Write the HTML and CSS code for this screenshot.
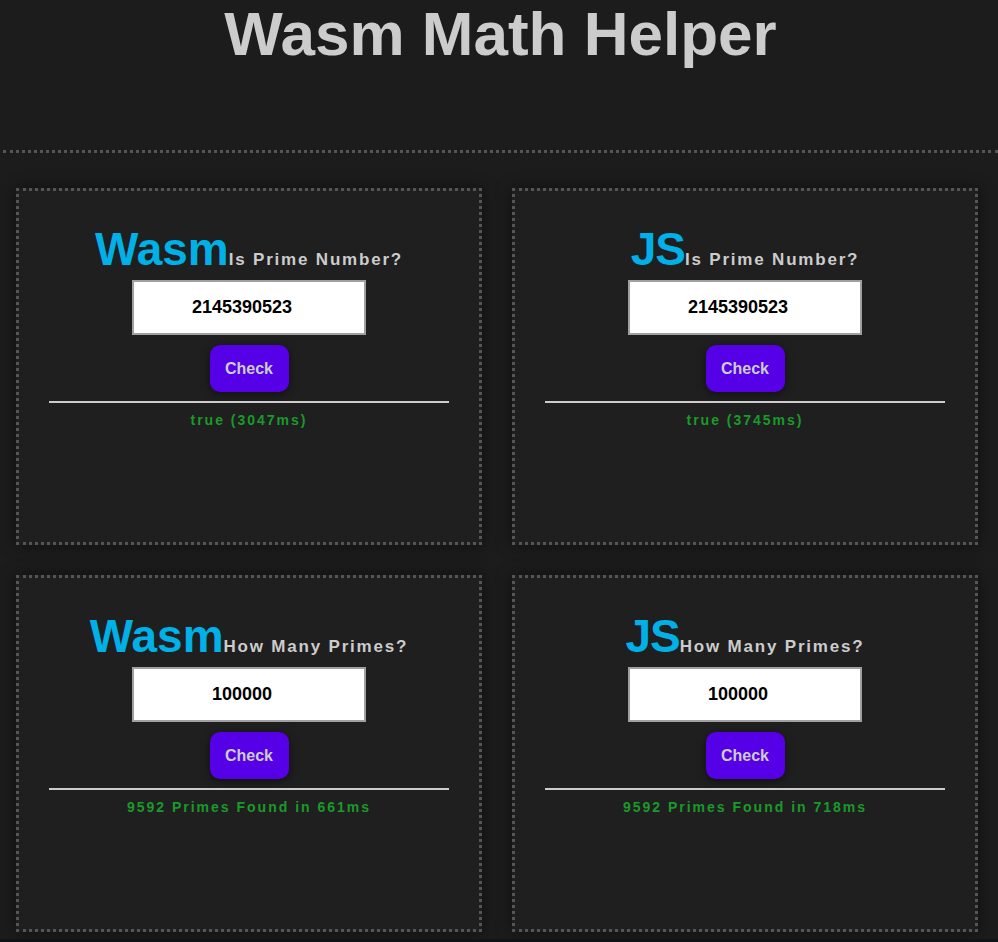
FILE: index.html
```html
<!DOCTYPE html>
<html lang="en">
<head>
<meta charset="utf-8">
<title>Wasm Math Helper</title>
<link rel="stylesheet" href="styles.css">
</head>
<body>
<header class="header">
  <h1 class="title">Wasm Math Helper</h1>
</header>
<main class="grid">
  <section class="card">
    <h2 class="card-title"><span class="lang">Wasm</span><span class="task">Is Prime Number?</span></h2>
    <input class="num" type="text" value="2145390523">
    <button class="btn">Check</button>
    <hr class="rule">
    <p class="result">true (3047ms)</p>
  </section>
  <section class="card">
    <h2 class="card-title"><span class="lang lang-js">JS</span><span class="task">Is Prime Number?</span></h2>
    <input class="num" type="text" value="2145390523">
    <button class="btn">Check</button>
    <hr class="rule">
    <p class="result">true (3745ms)</p>
  </section>
  <section class="card">
    <h2 class="card-title"><span class="lang">Wasm</span><span class="task">How Many Primes?</span></h2>
    <input class="num" type="text" value="100000">
    <button class="btn">Check</button>
    <hr class="rule">
    <p class="result">9592 Primes Found in 661ms</p>
  </section>
  <section class="card">
    <h2 class="card-title"><span class="lang lang-js">JS</span><span class="task">How Many Primes?</span></h2>
    <input class="num" type="text" value="100000">
    <button class="btn">Check</button>
    <hr class="rule">
    <p class="result">9592 Primes Found in 718ms</p>
  </section>
</main>
</body>
</html>
```
FILE: styles.css
```css
html {
  background: #0f1419;
}
body {
  margin: 0;
  background: #1c1c1c;
  font-family: "Liberation Sans", Arial, sans-serif;
  font-weight: 700;
  color: #cccccc;
  padding-bottom: 7px;
}
.header {
  height: 150px;
  border-bottom: 3px dotted #555555;
  margin-left: 3px;
}
.title {
  margin: 0;
  text-align: center;
  font-size: 62px;
  font-weight: 700;
  line-height: 68px;
  color: #cccccc;
}
.grid {
  display: grid;
  grid-template-columns: 466px 466px;
  column-gap: 30px;
  row-gap: 30px;
  padding: 35px 20px 0 16px;
}
.card {
  box-sizing: border-box;
  height: 357px;
  border: 3px dotted #555555;
  background: #1f1f1f;
  box-shadow: 0 0 16px rgba(0, 0, 0, 0.45);
  display: flex;
  flex-direction: column;
  align-items: center;
  padding-top: 35px;
}
.card-title {
  margin: 0;
  display: flex;
  align-items: baseline;
  line-height: 1;
  white-space: nowrap;
  font-weight: 700;
}
.lang {
  font-size: 46px;
  color: #00b0e6;
}
.lang-js {
  letter-spacing: -1px;
}
.task {
  font-size: 17px;
  letter-spacing: 1.8px;
  color: #cccccc;
}
.num {
  box-sizing: border-box;
  margin-top: 8px;
  width: 234px;
  height: 55px;
  padding: 1px 16px 1px 2px;
  border: 2px solid #a0a0a0;
  background: #ffffff;
  text-align: center;
  font-family: "Liberation Sans", Arial, sans-serif;
  font-weight: 700;
  font-size: 18px;
  color: #000000;
  outline: none;
}
.btn {
  margin-top: 10px;
  width: 79px;
  height: 47px;
  border: none;
  border-radius: 10px;
  background: #5500e6;
  color: #cccccc;
  font-family: "Liberation Sans", Arial, sans-serif;
  font-weight: 700;
  font-size: 16px;
  box-shadow: 0 2px 8px rgba(0, 0, 0, 0.5);
}
.rule {
  width: 400px;
  margin: 9px 0 0 0;
  height: 0;
  border: none;
  border-top: 2px solid #cccccc;
}
.result {
  margin: 9px 0 0 0;
  font-size: 14px;
  letter-spacing: 2px;
  color: #1a9a2a;
}
```
